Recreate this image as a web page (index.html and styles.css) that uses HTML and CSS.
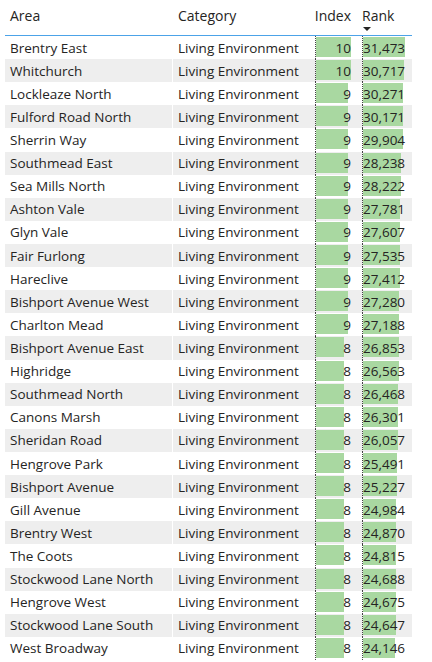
FILE: index.html
```html
<!DOCTYPE html>
<html>
<head>
<meta charset="utf-8">
<link rel="stylesheet" href="styles.css">
</head>
<body>
<div class="table">
  <div class="row head">
    <div class="cell c-area">Area</div>
    <div class="cell c-cat">Category</div>
    <div class="cell c-idx h-idx">Index</div>
    <div class="cell c-rank h-rank">Rank<span class="sort"></span></div>
  </div>
  <div class="body">
    <div class="row"><div class="cell c-area">Brentry East</div><div class="cell c-cat">Living Environment</div><div class="cell c-idx"><div class="bw"><div class="bar" style="width:100%"></div><span class="v">10</span></div></div><div class="cell c-rank"><div class="bw"><div class="bar" style="width:100%"></div><span class="v">31,473</span></div></div></div>
    <div class="row"><div class="cell c-area">Whitchurch</div><div class="cell c-cat">Living Environment</div><div class="cell c-idx"><div class="bw"><div class="bar" style="width:100%"></div><span class="v">10</span></div></div><div class="cell c-rank"><div class="bw"><div class="bar" style="width:97.6%"></div><span class="v">30,717</span></div></div></div>
    <div class="row"><div class="cell c-area">Lockleaze North</div><div class="cell c-cat">Living Environment</div><div class="cell c-idx"><div class="bw"><div class="bar" style="width:90%"></div><span class="v">9</span></div></div><div class="cell c-rank"><div class="bw"><div class="bar" style="width:96.18%"></div><span class="v">30,271</span></div></div></div>
    <div class="row"><div class="cell c-area">Fulford Road North</div><div class="cell c-cat">Living Environment</div><div class="cell c-idx"><div class="bw"><div class="bar" style="width:90%"></div><span class="v">9</span></div></div><div class="cell c-rank"><div class="bw"><div class="bar" style="width:95.86%"></div><span class="v">30,171</span></div></div></div>
    <div class="row"><div class="cell c-area">Sherrin Way</div><div class="cell c-cat">Living Environment</div><div class="cell c-idx"><div class="bw"><div class="bar" style="width:90%"></div><span class="v">9</span></div></div><div class="cell c-rank"><div class="bw"><div class="bar" style="width:95.02%"></div><span class="v">29,904</span></div></div></div>
    <div class="row"><div class="cell c-area">Southmead East</div><div class="cell c-cat">Living Environment</div><div class="cell c-idx"><div class="bw"><div class="bar" style="width:90%"></div><span class="v">9</span></div></div><div class="cell c-rank"><div class="bw"><div class="bar" style="width:89.72%"></div><span class="v">28,238</span></div></div></div>
    <div class="row"><div class="cell c-area">Sea Mills North</div><div class="cell c-cat">Living Environment</div><div class="cell c-idx"><div class="bw"><div class="bar" style="width:90%"></div><span class="v">9</span></div></div><div class="cell c-rank"><div class="bw"><div class="bar" style="width:89.67%"></div><span class="v">28,222</span></div></div></div>
    <div class="row"><div class="cell c-area">Ashton Vale</div><div class="cell c-cat">Living Environment</div><div class="cell c-idx"><div class="bw"><div class="bar" style="width:90%"></div><span class="v">9</span></div></div><div class="cell c-rank"><div class="bw"><div class="bar" style="width:88.27%"></div><span class="v">27,781</span></div></div></div>
    <div class="row"><div class="cell c-area">Glyn Vale</div><div class="cell c-cat">Living Environment</div><div class="cell c-idx"><div class="bw"><div class="bar" style="width:90%"></div><span class="v">9</span></div></div><div class="cell c-rank"><div class="bw"><div class="bar" style="width:87.72%"></div><span class="v">27,607</span></div></div></div>
    <div class="row"><div class="cell c-area">Fair Furlong</div><div class="cell c-cat">Living Environment</div><div class="cell c-idx"><div class="bw"><div class="bar" style="width:90%"></div><span class="v">9</span></div></div><div class="cell c-rank"><div class="bw"><div class="bar" style="width:87.49%"></div><span class="v">27,535</span></div></div></div>
    <div class="row"><div class="cell c-area">Hareclive</div><div class="cell c-cat">Living Environment</div><div class="cell c-idx"><div class="bw"><div class="bar" style="width:90%"></div><span class="v">9</span></div></div><div class="cell c-rank"><div class="bw"><div class="bar" style="width:87.1%"></div><span class="v">27,412</span></div></div></div>
    <div class="row"><div class="cell c-area">Bishport Avenue West</div><div class="cell c-cat">Living Environment</div><div class="cell c-idx"><div class="bw"><div class="bar" style="width:90%"></div><span class="v">9</span></div></div><div class="cell c-rank"><div class="bw"><div class="bar" style="width:86.68%"></div><span class="v">27,280</span></div></div></div>
    <div class="row"><div class="cell c-area">Charlton Mead</div><div class="cell c-cat">Living Environment</div><div class="cell c-idx"><div class="bw"><div class="bar" style="width:90%"></div><span class="v">9</span></div></div><div class="cell c-rank"><div class="bw"><div class="bar" style="width:86.39%"></div><span class="v">27,188</span></div></div></div>
    <div class="row"><div class="cell c-area">Bishport Avenue East</div><div class="cell c-cat">Living Environment</div><div class="cell c-idx"><div class="bw"><div class="bar" style="width:80%"></div><span class="v">8</span></div></div><div class="cell c-rank"><div class="bw"><div class="bar" style="width:85.32%"></div><span class="v">26,853</span></div></div></div>
    <div class="row"><div class="cell c-area">Highridge</div><div class="cell c-cat">Living Environment</div><div class="cell c-idx"><div class="bw"><div class="bar" style="width:80%"></div><span class="v">8</span></div></div><div class="cell c-rank"><div class="bw"><div class="bar" style="width:84.4%"></div><span class="v">26,563</span></div></div></div>
    <div class="row"><div class="cell c-area">Southmead North</div><div class="cell c-cat">Living Environment</div><div class="cell c-idx"><div class="bw"><div class="bar" style="width:80%"></div><span class="v">8</span></div></div><div class="cell c-rank"><div class="bw"><div class="bar" style="width:84.1%"></div><span class="v">26,468</span></div></div></div>
    <div class="row"><div class="cell c-area">Canons Marsh</div><div class="cell c-cat">Living Environment</div><div class="cell c-idx"><div class="bw"><div class="bar" style="width:80%"></div><span class="v">8</span></div></div><div class="cell c-rank"><div class="bw"><div class="bar" style="width:83.57%"></div><span class="v">26,301</span></div></div></div>
    <div class="row"><div class="cell c-area">Sheridan Road</div><div class="cell c-cat">Living Environment</div><div class="cell c-idx"><div class="bw"><div class="bar" style="width:80%"></div><span class="v">8</span></div></div><div class="cell c-rank"><div class="bw"><div class="bar" style="width:82.79%"></div><span class="v">26,057</span></div></div></div>
    <div class="row"><div class="cell c-area">Hengrove Park</div><div class="cell c-cat">Living Environment</div><div class="cell c-idx"><div class="bw"><div class="bar" style="width:80%"></div><span class="v">8</span></div></div><div class="cell c-rank"><div class="bw"><div class="bar" style="width:80.99%"></div><span class="v">25,491</span></div></div></div>
    <div class="row"><div class="cell c-area">Bishport Avenue</div><div class="cell c-cat">Living Environment</div><div class="cell c-idx"><div class="bw"><div class="bar" style="width:80%"></div><span class="v">8</span></div></div><div class="cell c-rank"><div class="bw"><div class="bar" style="width:80.15%"></div><span class="v">25,227</span></div></div></div>
    <div class="row"><div class="cell c-area">Gill Avenue</div><div class="cell c-cat">Living Environment</div><div class="cell c-idx"><div class="bw"><div class="bar" style="width:80%"></div><span class="v">8</span></div></div><div class="cell c-rank"><div class="bw"><div class="bar" style="width:79.38%"></div><span class="v">24,984</span></div></div></div>
    <div class="row"><div class="cell c-area">Brentry West</div><div class="cell c-cat">Living Environment</div><div class="cell c-idx"><div class="bw"><div class="bar" style="width:80%"></div><span class="v">8</span></div></div><div class="cell c-rank"><div class="bw"><div class="bar" style="width:79.02%"></div><span class="v">24,870</span></div></div></div>
    <div class="row"><div class="cell c-area">The Coots</div><div class="cell c-cat">Living Environment</div><div class="cell c-idx"><div class="bw"><div class="bar" style="width:80%"></div><span class="v">8</span></div></div><div class="cell c-rank"><div class="bw"><div class="bar" style="width:78.85%"></div><span class="v">24,815</span></div></div></div>
    <div class="row"><div class="cell c-area">Stockwood Lane North</div><div class="cell c-cat">Living Environment</div><div class="cell c-idx"><div class="bw"><div class="bar" style="width:80%"></div><span class="v">8</span></div></div><div class="cell c-rank"><div class="bw"><div class="bar" style="width:78.44%"></div><span class="v">24,688</span></div></div></div>
    <div class="row"><div class="cell c-area">Hengrove West</div><div class="cell c-cat">Living Environment</div><div class="cell c-idx"><div class="bw"><div class="bar" style="width:80%"></div><span class="v">8</span></div></div><div class="cell c-rank"><div class="bw"><div class="bar" style="width:78.4%"></div><span class="v">24,675</span></div></div></div>
    <div class="row"><div class="cell c-area">Stockwood Lane South</div><div class="cell c-cat">Living Environment</div><div class="cell c-idx"><div class="bw"><div class="bar" style="width:80%"></div><span class="v">8</span></div></div><div class="cell c-rank"><div class="bw"><div class="bar" style="width:78.31%"></div><span class="v">24,647</span></div></div></div>
    <div class="row"><div class="cell c-area">West Broadway</div><div class="cell c-cat">Living Environment</div><div class="cell c-idx"><div class="bw"><div class="bar" style="width:80%"></div><span class="v">8</span></div></div><div class="cell c-rank"><div class="bw"><div class="bar" style="width:76.72%"></div><span class="v">24,146</span></div></div></div>
  </div>
</div>
</body>
</html>
```

FILE: styles.css
```css
html, body {
  margin: 0;
  padding: 0;
  background: #ffffff;
}

body {
  font-family: "Segoe UI", "Open Sans", "Noto Sans", sans-serif;
  font-size: 13.5px;
  color: #252423;
  overflow: hidden;
}

.table {
  margin-left: 5px;
  width: 407px;
}

.row {
  display: grid;
  grid-template-columns: 167px 141px 45px 54px;
  height: 23.12px;
  align-items: stretch;
}

.body .row:nth-child(even) {
  background: #eeeeee;
}

.cell {
  display: flex;
  align-items: center;
  white-space: nowrap;
  overflow: hidden;
  min-width: 0;
}

.c-area {
  padding-left: 5px;
}

.c-cat {
  padding-left: 5px;
  border-left: 1px solid #ffffff;
}

.head {
  height: 35px;
  border-bottom: 1px solid #4ca3e8;
  align-items: start;
  font-size: 14px;
}

.head .cell {
  align-items: flex-start;
  padding-top: 6px;
  overflow: visible;
}

.head .c-cat {
  border-left-color: transparent;
}

.h-idx {
  justify-content: flex-end;
  padding-right: 8px;
}

.h-rank {
  padding-left: 4px;
  position: relative;
}

.sort {
  position: absolute;
  left: 5px;
  top: 27px;
  width: 0;
  height: 0;
  border-left: 4px solid transparent;
  border-right: 4px solid transparent;
  border-top: 4px solid #252423;
}

.c-idx {
  padding-left: 2px;
  padding-right: 7px;
  align-items: stretch;
}

.c-rank {
  padding-left: 4px;
  padding-right: 8px;
  align-items: stretch;
}

.bw {
  position: relative;
  flex: 1;
  display: flex;
  align-items: center;
  border-left: 1px dotted #444444;
}

.c-idx .bw {
  justify-content: flex-end;
}

.bar {
  position: absolute;
  left: 0;
  top: 1px;
  height: 20px;
  background: #a9d8a1;
}

.v {
  position: relative;
}
```
